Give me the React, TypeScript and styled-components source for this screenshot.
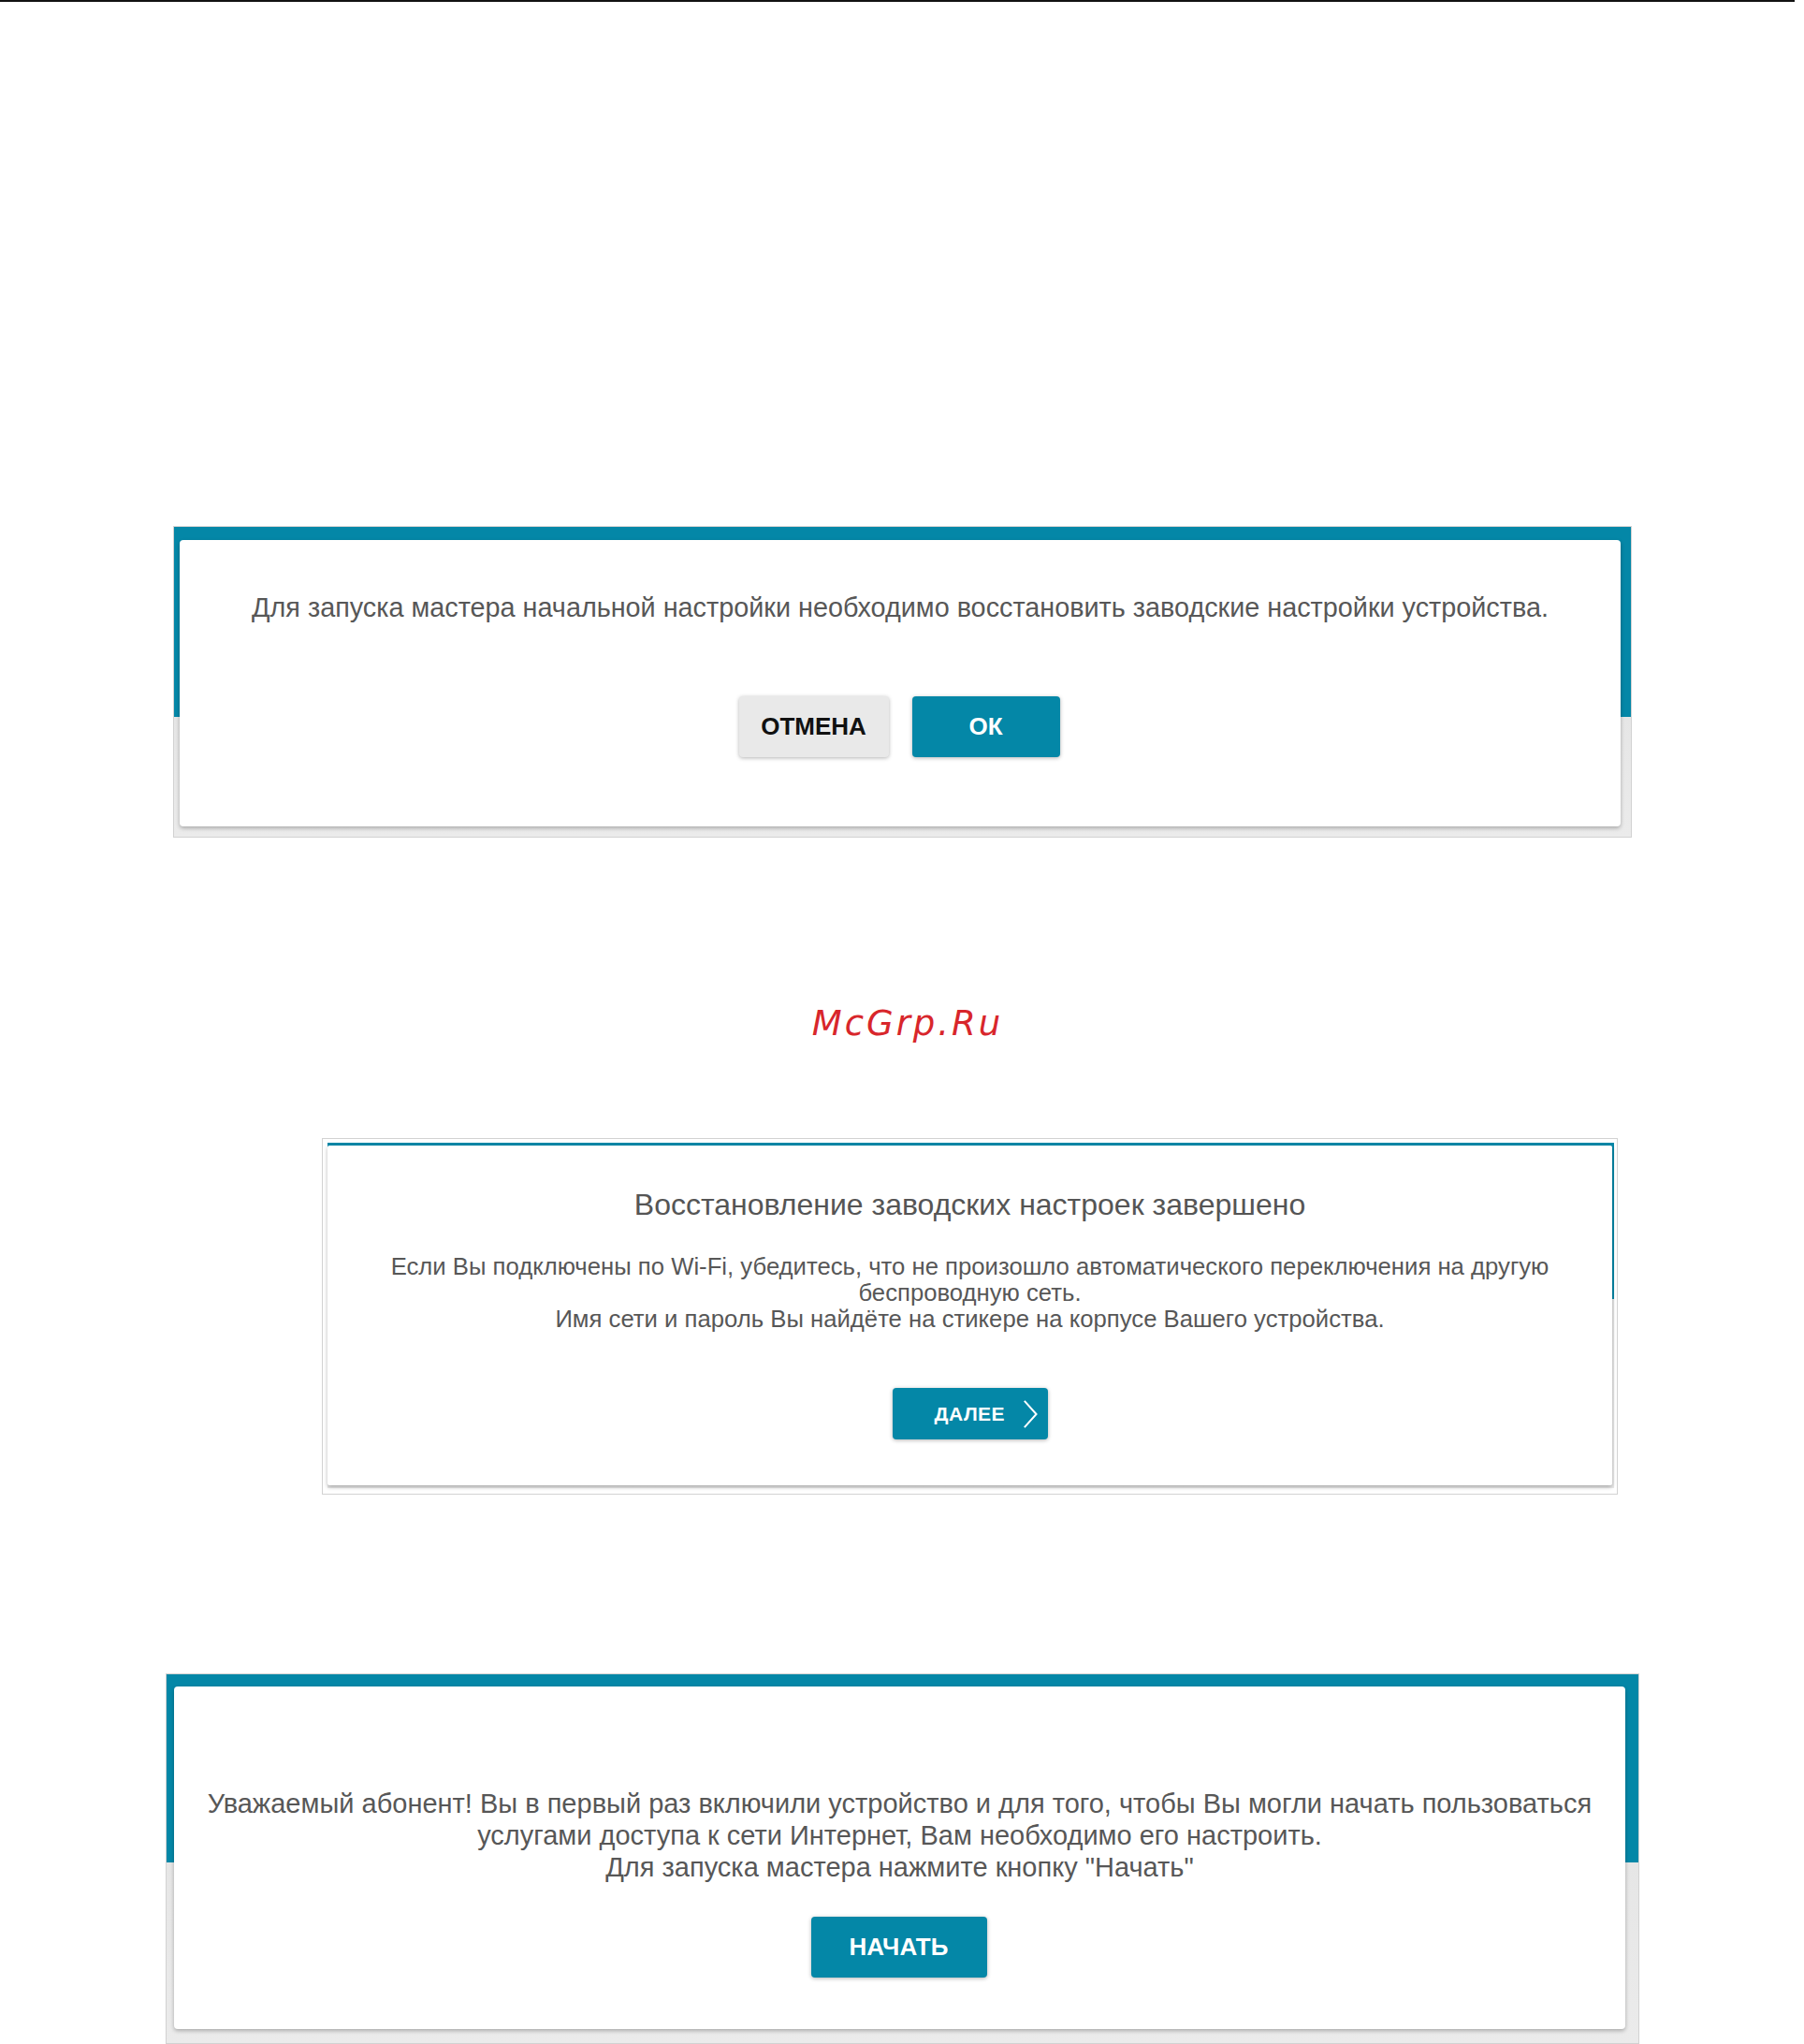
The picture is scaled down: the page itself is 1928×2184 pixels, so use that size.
import styled, { createGlobalStyle } from "styled-components";

const TEAL = "#0487a7";

const GlobalStyle = createGlobalStyle`
  html, body {
    margin: 0;
    padding: 0;
    background: #ffffff;
  }
  body {
    font-family: "Liberation Sans", Arial, sans-serif;
  }
`

const Page = styled.div`
  width: 1928px;
  min-height: 2184px;
  display: flex;
  flex-direction: column;
  align-items: flex-start;
`

const TopRule = styled.div`
  width: 1918px;
  height: 2px;
  background: #111;
`

type ShotProps = {
  $top: number
  $left: number
  $width: number
  $pad: string
}

// thin grey border around each captured dialog
const Shot = styled.div<ShotProps>`
  box-sizing: border-box;
  margin-top: ${p => p.$top}px;
  margin-left: ${p => p.$left}px;
  width: ${p => p.$width}px;
  padding: ${p => p.$pad};
  border: 1px solid #d2d2d2;
  background: #fff;
`

type FrameProps = {
  $band: number
  $pad: string
}

// teal header strip behind the modal, fading into the grey page
const Frame = styled.div<FrameProps>`
  padding: ${p => p.$pad};
  background: linear-gradient(to bottom, ${TEAL} 0, ${TEAL} ${p => p.$band}px, #e6e6e6 ${p => p.$band}px, #ebebeb 100%);
`

type CardProps = {
  $pad: string
  $height: number
  $radius?: number
}

const Card = styled.div<CardProps>`
  box-sizing: border-box;
  height: ${p => p.$height}px;
  padding: ${p => p.$pad};
  background: #fff;
  border-radius: ${p => p.$radius ?? 4}px;
  box-shadow: 0 2px 4px rgba(0, 0, 0, 0.28);
  display: flex;
  flex-direction: column;
  align-items: center;
`

type TextProps = {
  $size: number
  $line: number
}

const Message = styled.p<TextProps>`
  margin: 0;
  color: #575757;
  font-size: ${p => p.$size}px;
  line-height: ${p => p.$line}px;
  text-align: center;
  white-space: nowrap;
`

const Title = styled.h2`
  margin: 0 0 34px;
  color: #555;
  font-size: 32px;
  line-height: 36px;
  font-weight: 400;
  text-align: center;
`

const ButtonRow = styled.div<{ $gap: number }>`
  display: flex;
  gap: ${p => p.$gap}px;
`

type ButtonProps = {
  $width: number
  $height: number
  $size: number
  $secondary?: boolean
}

const Button = styled.button<ButtonProps>`
  box-sizing: border-box;
  width: ${p => p.$width}px;
  height: ${p => p.$height}px;
  border: none;
  border-radius: 4px;
  display: flex;
  align-items: center;
  justify-content: center;
  gap: 19px;
  font-family: "Liberation Sans", Arial, sans-serif;
  font-weight: 700;
  font-size: ${p => p.$size}px;
  color: ${p => (p.$secondary ? "#111" : "#fff")};
  background: ${p => (p.$secondary ? "#e9e9e9" : TEAL)};
  box-shadow: 0 1px 4px rgba(0, 0, 0, 0.3);
  cursor: pointer;
`

const NextButton = styled(Button)`
  padding: 0 10px 0 45px;
  justify-content: flex-start;
  letter-spacing: 0.5px;
`

const Watermark = styled.p`
  margin: 180px 0 0;
  width: 100%;
  padding-left: 12px;
  box-sizing: border-box;
  text-align: center;
  font-family: "DejaVu Sans", sans-serif;
  font-style: italic;
  font-size: 37px;
  line-height: 37px;
  letter-spacing: 3px;
  color: #d8262b;
`

const Chevron = () => (
  <svg width="18" height="34" viewBox="0 0 18 34" fill="none">
    <path d="M2 1.5 L16 17 L2 32.5" stroke="#fff" strokeWidth="2.2" />
  </svg>
)

const App = () => {
  return (
    <>
      <GlobalStyle />
      <Page>
        <TopRule />

        <Shot $top={560} $left={185} $width={1559} $pad="0">
          <Frame $band={203} $pad="14px 11px 11px 6px">
            <Card $height={306} $pad="56px 0 0">
              <Message $size={28.8} $line={32}>
                Для запуска мастера начальной настройки необходимо восстановить заводские настройки устройства.
              </Message>
              <ButtonRow $gap={25} style={{ marginTop: 79, marginLeft: -2 }}>
                <Button $secondary $width={160} $height={65} $size={26}>ОТМЕНА</Button>
                <Button $width={158} $height={65} $size={26}>ОК</Button>
              </ButtonRow>
            </Card>
          </Frame>
        </Shot>

        <Watermark>McGrp.Ru</Watermark>

        <Shot $top={104} $left={344} $width={1385} $pad="4px 3px 6px 5px">
          <Frame $band={167} $pad="3px 2px 3px 0">
            <Card $height={363} $pad="45px 0 0" $radius={2}>
              <Title>Восстановление заводских настроек завершено</Title>
              <Message $size={25.7} $line={28}>
                Если Вы подключены по Wi-Fi, убедитесь, что не произошло автоматического переключения на другую
                <br />
                беспроводную сеть.
                <br />
                Имя сети и пароль Вы найдёте на стикере на корпусе Вашего устройства.
              </Message>
              <NextButton $width={166} $height={55} $size={21} style={{ marginTop: 60 }}>
                ДАЛЕЕ
                <Chevron />
              </NextButton>
            </Card>
          </Frame>
        </Shot>

        <Shot $top={191} $left={177} $width={1575} $pad="0">
          <Frame $band={201} $pad="13px 14px 15px 8px">
            <Card $height={366} $pad="108px 0 0">
              <Message $size={29} $line={34}>
                Уважаемый абонент! Вы в первый раз включили устройство и для того, чтобы Вы могли начать пользоваться
                <br />
                услугами доступа к сети Интернет, Вам необходимо его настроить.
                <br />
                Для запуска мастера нажмите кнопку "Начать"
              </Message>
              <Button $width={188} $height={65} $size={26} style={{ marginTop: 36, marginLeft: -2 }}>НАЧАТЬ</Button>
            </Card>
          </Frame>
        </Shot>
      </Page>
    </>
  )
}

export default App
